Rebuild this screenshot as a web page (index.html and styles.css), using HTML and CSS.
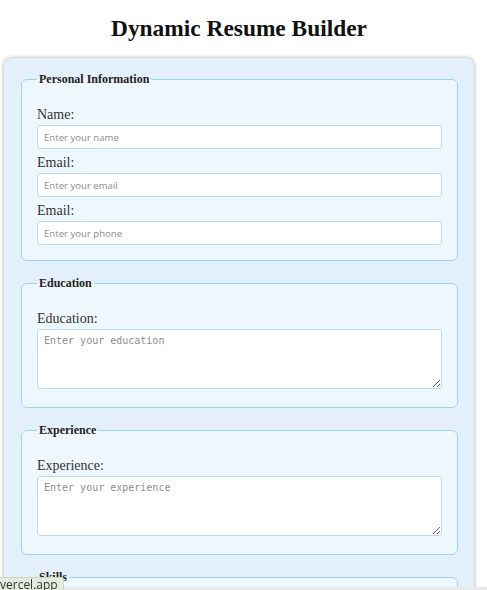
FILE: index.html
```html
<!DOCTYPE html>
<html lang="en">
<head>
<meta charset="utf-8">
<title>Dynamic Resume Builder</title>
<link rel="stylesheet" href="styles.css">
</head>
<body>
<h1 class="title">Dynamic Resume Builder</h1>
<form class="builder">
  <fieldset class="section">
    <legend class="section-title">Personal Information</legend>
    <label class="field-label" for="name">Name:</label>
    <input class="field-input" id="name" type="text" placeholder="Enter your name">
    <label class="field-label" for="email">Email:</label>
    <input class="field-input" id="email" type="email" placeholder="Enter your email">
    <label class="field-label" for="phone">Email:</label>
    <input class="field-input" id="phone" type="tel" placeholder="Enter your phone">
  </fieldset>
  <fieldset class="section">
    <legend class="section-title">Education</legend>
    <label class="field-label" for="education">Education:</label>
    <textarea class="field-area" id="education" placeholder="Enter your education"></textarea>
  </fieldset>
  <fieldset class="section">
    <legend class="section-title">Experience</legend>
    <label class="field-label" for="experience">Experience:</label>
    <textarea class="field-area" id="experience" placeholder="Enter your experience"></textarea>
  </fieldset>
  <fieldset class="section">
    <legend class="section-title">Skills</legend>
    <label class="field-label" for="skills">Skills:</label>
    <textarea class="field-area" id="skills" placeholder="Enter your skills"></textarea>
  </fieldset>
</form>
<div class="status-link">vercel.app</div>
<div class="bottom-edge"></div>
</body>
</html>
```

FILE: styles.css
```css
html, body {
  margin: 0;
  background: #ffffff;
}
body {
  padding: 0 13px 0 4px;
  font-family: "Liberation Serif", "Times New Roman", serif;
  color: #222;
  overflow: hidden;
}
.title {
  font-size: 23.4px;
  font-weight: bold;
  text-align: center;
  margin: 14px 0 16px;
  color: #111;
  line-height: 28px;
}
.builder {
  background: #e3f0fc;
  border-radius: 8px;
  box-shadow: 0 0 4px rgba(0, 0, 0, 0.35);
  padding: 14px 16px 20px 17px;
}
.section {
  background: #eef7fe;
  border: 1.5px solid #9bd5eb;
  border-radius: 6px;
  margin: 0 0 15px;
  padding: 20px 15px 9px;
  display: flex;
  flex-direction: column;
}
.section-title {
  font-size: 12px;
  font-weight: bold;
  color: #222;
  padding: 0 2px;
  margin-left: 0;
}
.field-label {
  font-size: 14px;
  line-height: 16px;
  color: #333;
  margin-bottom: 2px;
}
.field-input {
  box-sizing: border-box;
  height: 24px;
  border: 1px solid #b6ddef;
  border-radius: 3px;
  background: #fff;
  padding: 0 6px;
  margin: 0 0 6px;
  font-family: "Open Sans", sans-serif;
  font-size: 9.6px;
}
.field-input::placeholder {
  color: #8e8e8e;
}
.field-area {
  box-sizing: border-box;
  height: 60px;
  border: 1px solid #b6ddef;
  border-radius: 3px;
  background: #fff;
  padding: 5px 6px;
  margin: 0 0 9px;
  font-family: "DejaVu Sans Mono", monospace;
  font-size: 10px;
  resize: vertical;
}
.field-area::placeholder {
  color: #8e8e8e;
}
.status-link {
  position: fixed;
  left: -7px;
  bottom: 0;
  height: 12px;
  padding: 0 5px 0 6px;
  background: #e3ecdc;
  border: 1px solid #c9d6c0;
  border-bottom: 0;
  border-radius: 0 3px 0 0;
  font-family: "Open Sans", sans-serif;
  font-size: 12px;
  line-height: 13px;
  color: #333;
  z-index: 2;
}
.bottom-edge {
  position: fixed;
  left: 0;
  right: 0;
  bottom: 0;
  height: 3px;
  background: #e9e9e9;
  z-index: 1;
}
```
